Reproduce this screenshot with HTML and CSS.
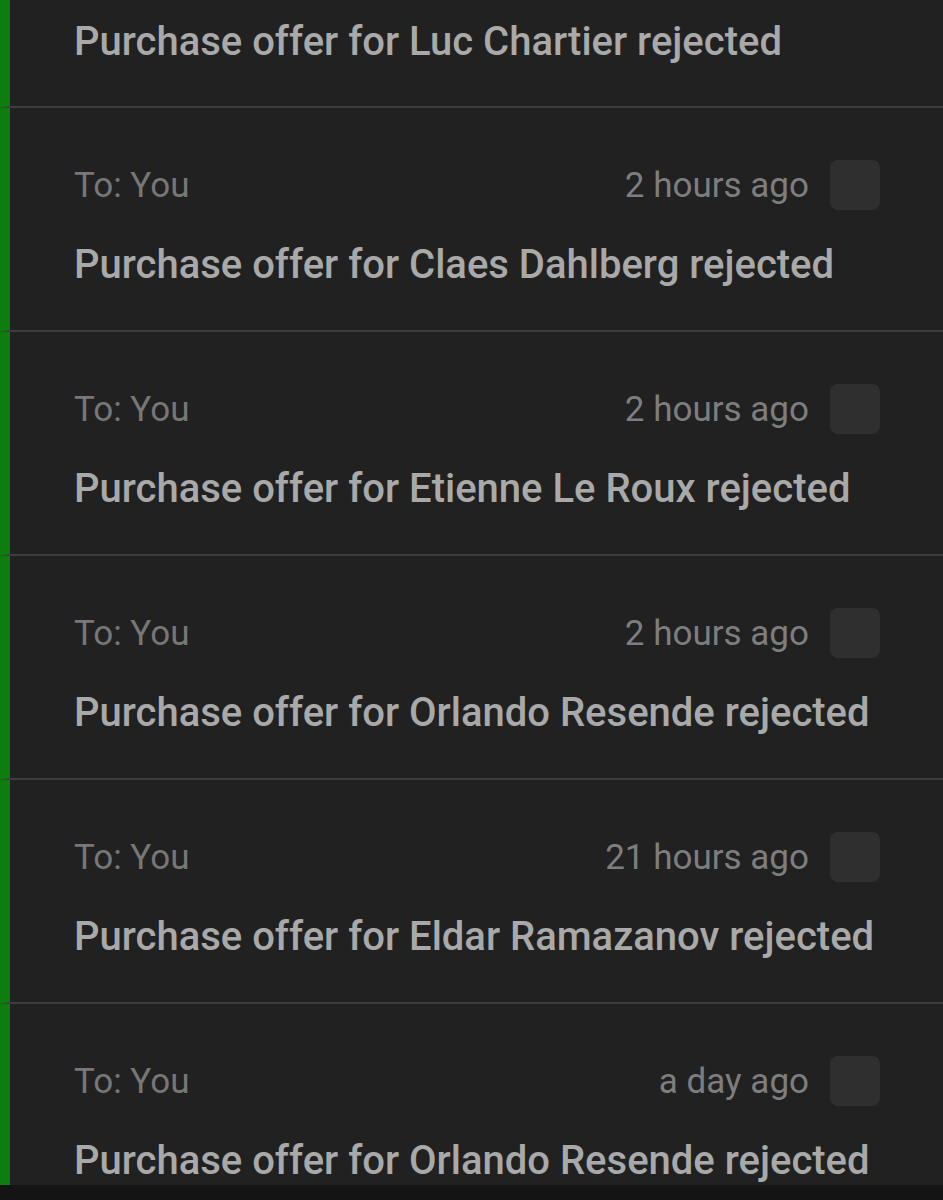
FILE: index.html
```html
<!DOCTYPE html>
<html lang="en">
<head>
  <meta charset="UTF-8" />
  <title>Messages</title>
  <link rel="stylesheet" href="styles.css">
</head>
<body>
  <div class="inbox">
    <div class="message scrolled">
      <div class="subject">Purchase offer for Luc Chartier rejected</div>
    </div>
    <div class="message">
      <div class="message-head">
        <span class="to">To: You</span>
        <span class="time">2 hours ago</span>
        <span class="check"></span>
      </div>
      <div class="subject">Purchase offer for Claes Dahlberg rejected</div>
    </div>
    <div class="message">
      <div class="message-head">
        <span class="to">To: You</span>
        <span class="time">2 hours ago</span>
        <span class="check"></span>
      </div>
      <div class="subject">Purchase offer for Etienne Le Roux rejected</div>
    </div>
    <div class="message">
      <div class="message-head">
        <span class="to">To: You</span>
        <span class="time">2 hours ago</span>
        <span class="check"></span>
      </div>
      <div class="subject">Purchase offer for Orlando Resende rejected</div>
    </div>
    <div class="message">
      <div class="message-head">
        <span class="to">To: You</span>
        <span class="time">21 hours ago</span>
        <span class="check"></span>
      </div>
      <div class="subject">Purchase offer for Eldar Ramazanov rejected</div>
    </div>
    <div class="message">
      <div class="message-head">
        <span class="to">To: You</span>
        <span class="time">a day ago</span>
        <span class="check"></span>
      </div>
      <div class="subject">Purchase offer for Orlando Resende rejected</div>
    </div>
  </div>
</body>
</html>
```

FILE: styles.css
```css
body {
  margin: 0;
  font-family: Roboto, sans-serif;
  background-color: #141414;
  overflow: hidden;
}

.inbox {
  height: 1185px;
  overflow: hidden;
  background-color: #212121;
}

.message {
  box-sizing: border-box;
  height: 224px;
  border-left: 10px solid #0e7d10;
  border-bottom: 2px solid #3d3d3d;
  padding: 52px 63px 0 64px;
}

/* first one is partly scrolled out of view */
.message.scrolled {
  height: 108px;
  padding-top: 18px;
}

.message-head {
  display: flex;
  align-items: center;
  height: 50px;
  font-size: 35px;
  color: #777;
}

.to {
  flex: 1;
}

.time {
  color: #7e7e7e;
  margin-right: 21px;
}

.check {
  width: 50px;
  height: 50px;
  border-radius: 8px;
  background-color: #2f2f2f;
}

.subject {
  margin-top: 31px;
  font-size: 40px;
  line-height: 48px;
  font-weight: 500;
  color: #a9a9a9;
  white-space: nowrap;
}

.message.scrolled .subject {
  margin-top: 0;
}
```
